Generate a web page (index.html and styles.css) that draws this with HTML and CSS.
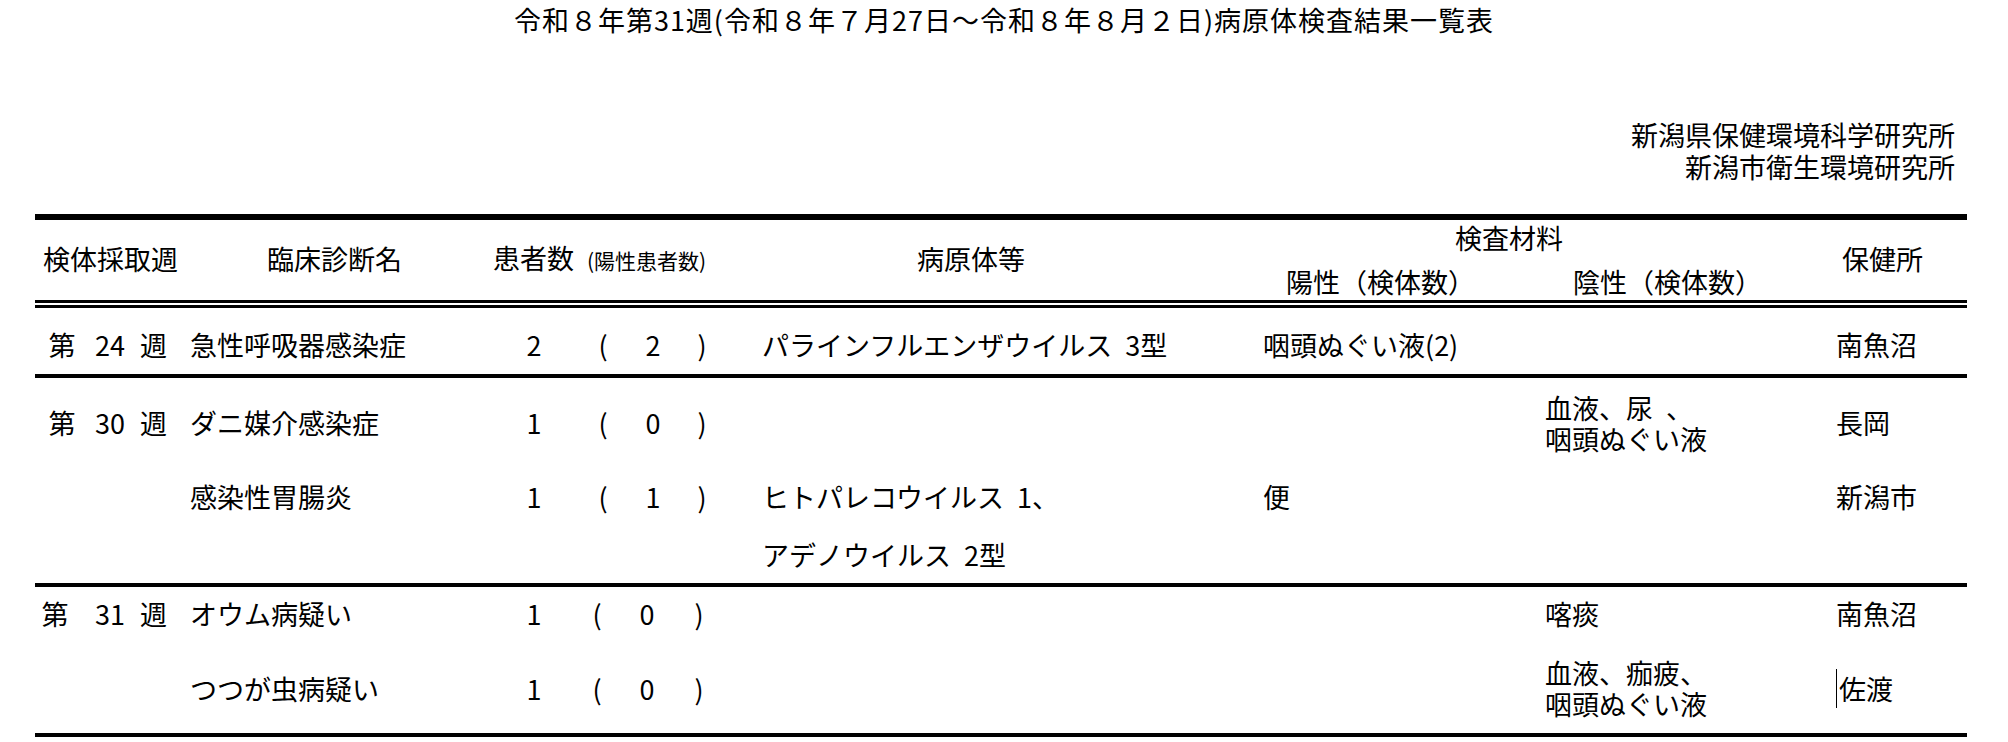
FILE: index.html
```html
<!DOCTYPE html>
<html lang="ja">
<head>
<meta charset="utf-8">
<title>病原体検査結果一覧表</title>
<link rel="stylesheet" href="styles.css">
</head>
<body>
<h1 class="title">令和８年第31週(令和８年７月27日～令和８年８月２日)病原体検査結果一覧表</h1>
<div class="org">
  <div class="org-line">新潟県保健環境科学研究所</div>
  <div class="org-line">新潟市衛生環境研究所</div>
</div>
<div class="table">
  <div class="cols head">
    <div class="h-week">検体採取週</div>
    <div class="h-diag">臨床診断名</div>
    <div class="h-count">患者数<span class="small">(陽性患者数)</span></div>
    <div class="h-path">病原体等</div>
    <div class="h-mat">
      <div class="h-mat-title">検査材料</div>
      <div class="h-pos">陽性（検体数）</div>
      <div class="h-neg">陰性（検体数）</div>
    </div>
    <div class="h-hoken">保健所</div>
  </div>
  <div class="dbl"></div>

  <div class="group">
    <div class="cols row g1r1">
      <div class="wk"><span>第</span><span>24</span><span>週</span></div>
      <div class="diag">急性呼吸器感染症</div>
      <div class="cnt"><span>2</span><span>(</span><span>2</span><span>)</span></div>
      <div class="path">パラインフルエンザウイルス 3型</div>
      <div class="pos">咽頭ぬぐい液(2)</div>
      <div class="neg"></div>
      <div class="hoken">南魚沼</div>
    </div>
  </div>

  <div class="group">
    <div class="cols row g2r1">
      <div class="wk"><span>第</span><span>30</span><span>週</span></div>
      <div class="diag">ダニ媒介感染症</div>
      <div class="cnt"><span>1</span><span>(</span><span>0</span><span>)</span></div>
      <div class="path"></div>
      <div class="pos"></div>
      <div class="neg"><div class="ln">血液、尿 、</div><div class="ln">咽頭ぬぐい液</div></div>
      <div class="hoken">長岡</div>
    </div>
    <div class="cols row g2r2">
      <div class="wk"></div>
      <div class="diag">感染性胃腸炎</div>
      <div class="cnt"><span>1</span><span>(</span><span>1</span><span>)</span></div>
      <div class="path">ヒトパレコウイルス 1、</div>
      <div class="pos">便</div>
      <div class="neg"></div>
      <div class="hoken">新潟市</div>
    </div>
    <div class="cols row g2r3">
      <div class="wk"></div>
      <div class="diag"></div>
      <div class="cnt"></div>
      <div class="path">アデノウイルス 2型</div>
      <div class="pos"></div>
      <div class="neg"></div>
      <div class="hoken"></div>
    </div>
  </div>

  <div class="group">
    <div class="cols row g3r1">
      <div class="wk wk-b"><span>第</span><span>31</span><span>週</span></div>
      <div class="diag">オウム病疑い</div>
      <div class="cnt cnt-b"><span>1</span><span>(</span><span>0</span><span>)</span></div>
      <div class="path"></div>
      <div class="pos"></div>
      <div class="neg">喀痰</div>
      <div class="hoken">南魚沼</div>
    </div>
    <div class="cols row g3r2">
      <div class="wk"></div>
      <div class="diag">つつが虫病疑い</div>
      <div class="cnt cnt-b"><span>1</span><span>(</span><span>0</span><span>)</span></div>
      <div class="path"></div>
      <div class="pos"></div>
      <div class="neg"><div class="ln">血液、痂疲、</div><div class="ln">咽頭ぬぐい液</div></div>
      <div class="hoken"><span class="mark">佐渡</span></div>
    </div>
  </div>
</div>
</body>
</html>
```

FILE: styles.css
```css
html, body {
  margin: 0;
  padding: 0;
  background: #fff;
}

body {
  font-family: "Noto Sans CJK JP", "Noto Sans", sans-serif;
  color: #000;
  font-size: 27px;
  line-height: 32px;
}

.title {
  margin: 4px 0 0;
  font-size: 27px;
  font-weight: normal;
  line-height: 32px;
  letter-spacing: 1px;
  text-align: center;
}

.org {
  margin: 83px 53px 0 0;
  text-align: right;
}

.org-line {
  height: 32px;
  overflow: visible;
}

.table {
  margin: 31px 41px 0 35px;
  border-top: 6px solid #000;
}

.cols {
  display: grid;
  grid-template-columns: 155px 300px 272px 501px 282px 291px 131px;
}

/* header */
.head {
  height: 80px;
  box-sizing: border-box;
  padding-bottom: 6px;
  align-items: center;
  white-space: nowrap;
}

.h-week { padding-left: 8px; }
.h-diag { padding-left: 77px; }
.h-count { padding-left: 3px; }
.h-path { padding-left: 155px; }
.h-hoken { padding-left: 6px; }

.small {
  font-size: 21px;
  margin-left: 13px;
}

.h-mat {
  grid-column: span 2;
  align-self: stretch;
  display: grid;
  grid-template-columns: 282px 291px;
  grid-template-rows: 32px 32px;
  row-gap: 12px;
  padding-top: 2px;
}

.h-mat-title {
  grid-column: span 2;
  padding-left: 192px;
}

.h-pos { padding-left: 23px; }
.h-neg { padding-left: 28px; }

.dbl {
  height: 2px;
  border-top: 3px solid #000;
  border-bottom: 3px solid #000;
}

/* body rows */
.group {
  border-bottom: 4px solid #000;
}

.row {
  box-sizing: border-box;
  align-items: center;
  line-height: 31px;
  white-space: nowrap;
  word-spacing: 7px;
  padding-bottom: 3px;
}

.ln {
  height: 31px;
}

.g1r1 { height: 66px; padding-top: 6px; padding-bottom: 0; }
.g2r1 { height: 92px; }
.g2r2 { height: 56px; }
.g2r3 { height: 57px; padding-bottom: 1px; }
.g3r1 { height: 55px; }
.g3r2 { height: 91px; padding-top: 1px; padding-bottom: 0; }

.wk {
  display: grid;
  grid-template-columns: 54px 42px 45px;
  justify-items: center;
}

.wk-b span:first-child {
  padding-right: 14px;
}

.cnt {
  display: grid;
  grid-template-columns: 88px 50px 50px 48px;
  justify-items: center;
}

.cnt-b {
  grid-template-columns: 88px 38px 62px 42px;
}

.mark {
  border-left: 1px solid #000;
  padding-left: 2px;
}
```
